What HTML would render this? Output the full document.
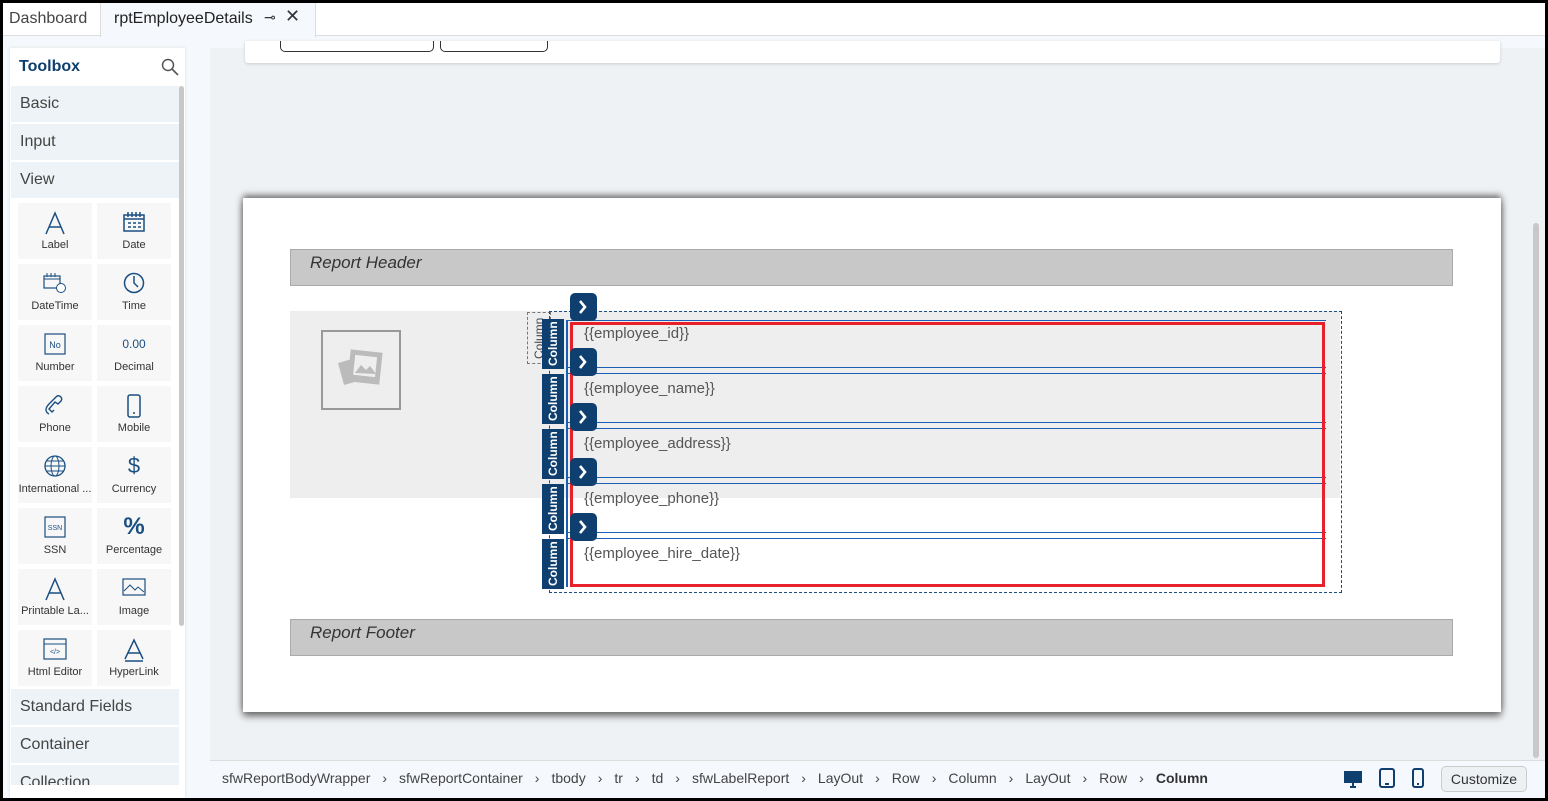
<!DOCTYPE html>
<html><head><meta charset="utf-8"><style>
*{box-sizing:border-box;margin:0;padding:0}
body{width:1548px;height:801px;overflow:hidden;background:#000;font-family:"Liberation Sans",sans-serif;position:relative}
.a{position:absolute}
#frame{left:3px;top:3px;width:1542px;height:795px;background:#f5f8fc;overflow:hidden}
.tile{position:absolute;width:74px;height:56px;background:#f7f7f7;text-align:center;font-size:11px;color:#333}
.tile svg{display:block;margin:8px auto 2px}
.tile span{display:block;position:absolute;left:0;right:0;top:36px;white-space:nowrap;overflow:hidden;text-overflow:ellipsis}
.cat{position:absolute;left:8px;width:168px;height:36px;background:#edf3f6;font-size:16px;color:#444;padding:9px 0 0 9px}
.col{position:absolute;left:539px;width:22px;height:50px;background:#0e3f6e;color:#fff;font-size:12px;font-weight:bold;writing-mode:vertical-rl;transform:rotate(180deg);text-align:center;line-height:22px}
.arr{position:absolute;left:567px;width:27px;height:28px;background:#0e3f6e;border-radius:5px;color:#fff}
.fld{position:absolute;left:581px;font-size:15px;color:#555}
.hl{position:absolute;left:565px;width:758px;height:1px;background:#1a5fb4}
.bc{font-size:14px;color:#444}
.bc i{font-style:normal;margin:0 12px 0 12px}
</style></head><body>
<div id="frame" class="a">
<div class="a" style="left:0;top:0;width:1542px;height:33px;background:#fff;border-bottom:1px solid #ddd"></div>
<div class="a" style="left:6px;top:7px;font-size:16px;color:#444">Dashboard</div>
<div class="a" style="left:97px;top:0;width:216px;height:34px;background:#f5f8fc;border-left:1px solid #ddd;border-right:1px solid #ddd"></div>
<div class="a" style="left:111px;top:7px;font-size:16px;color:#222">rptEmployeeDetails</div>
<div class="a" style="left:261px;top:6px;font-size:14px;color:#333">⊸</div>
<div class="a" style="left:282px;top:3px;font-size:18px;color:#333">✕</div>
<div class="a" style="left:7px;top:45px;width:175px;height:750px;background:#fff;box-shadow:0 0 3px #ddd"></div>
<div class="a" style="left:16px;top:55px;font-size:16px;color:#0e3f6e;font-weight:bold">Toolbox</div>
<svg class="a" style="left:158px;top:55px" width="18" height="18"><circle cx="7" cy="7" r="5.5" fill="none" stroke="#555" stroke-width="1.5"/><path d="M11 11l6 6" stroke="#555" stroke-width="1.6"/></svg>
<div class="a" style="left:176px;top:83px;width:5px;height:540px;background:#c8c8c8;border-radius:3px"></div>
<div class="cat" style="top:83px">Basic</div>
<div class="cat" style="top:121px">Input</div>
<div class="cat" style="top:159px">View</div>
<div class="tile" style="left:15px;top:200px"><svg width="22" height="24"><path d="M2 23L11 2l9 21M5 16h12" fill="none" stroke="#1a4f82" stroke-width="1.5"/></svg><span>Label</span></div>
<div class="tile" style="left:94px;top:200px"><svg width="22" height="22"><rect x="1" y="4" width="20" height="16" fill="none" stroke="#1a4f82" stroke-width="1.5"/><path d="M1 8h20M5 1v5M9 1v5M13 1v5M17 1v5M5 12h3M10 12h3M15 12h3M5 16h3M10 16h3M15 16h3" stroke="#1a4f82" stroke-width="1.5"/></svg><span>Date</span></div>
<div class="tile" style="left:15px;top:261px"><svg width="24" height="22"><rect x="1" y="4" width="16" height="12" fill="none" stroke="#1a4f82" stroke-width="1.2"/><path d="M1 7h16M4 1v4M8 1v4M12 1v4" stroke="#1a4f82"/><circle cx="18" cy="16" r="4.5" fill="#fff" stroke="#1a4f82"/></svg><span>DateTime</span></div>
<div class="tile" style="left:94px;top:261px"><svg width="22" height="22"><circle cx="11" cy="11" r="9.5" fill="none" stroke="#1a4f82" stroke-width="1.5"/><path d="M11 4v7l4 4" fill="none" stroke="#1a4f82" stroke-width="1.5"/></svg><span>Time</span></div>
<div class="tile" style="left:15px;top:322px"><svg width="22" height="22"><rect x="1" y="1" width="20" height="20" fill="none" stroke="#1a4f82" stroke-width="1.2"/><text x="11" y="15" font-size="9" text-anchor="middle" fill="#1a4f82" font-family="Liberation Sans">No</text></svg><span>Number</span></div>
<div class="tile" style="left:94px;top:322px"><div style="height:32px;padding-top:12px;color:#1a4f82;font-size:12px">0.00</div><span>Decimal</span></div>
<div class="tile" style="left:15px;top:383px"><svg width="24" height="22"><path d="M6 20c-4-2-4-6 0-10l8-8c3-1 6 2 4 5l-3 3-3-2-6 7 3 3 2-2" fill="none" stroke="#1a4f82" stroke-width="1.4"/></svg><span>Phone</span></div>
<div class="tile" style="left:94px;top:383px"><svg width="16" height="24"><rect x="2" y="1" width="12" height="22" rx="2" fill="none" stroke="#1a4f82" stroke-width="1.5"/><circle cx="8" cy="19" r="1" fill="#1a4f82"/></svg><span>Mobile</span></div>
<div class="tile" style="left:15px;top:444px"><svg width="24" height="22"><circle cx="12" cy="11" r="10" fill="none" stroke="#1a4f82" stroke-width="1.3"/><ellipse cx="12" cy="11" rx="4" ry="10" fill="none" stroke="#1a4f82"/><path d="M2 11h20M4 6h16M4 16h16" stroke="#1a4f82"/></svg><span>International ...</span></div>
<div class="tile" style="left:94px;top:444px"><div style="height:32px;padding-top:6px;color:#1a4f82;font-size:22px">$</div><span>Currency</span></div>
<div class="tile" style="left:15px;top:505px"><svg width="22" height="22"><rect x="1" y="1" width="20" height="20" fill="none" stroke="#1a4f82" stroke-width="1.2"/><text x="11" y="14" font-size="7" text-anchor="middle" fill="#1a4f82" font-family="Liberation Sans">SSN</text></svg><span>SSN</span></div>
<div class="tile" style="left:94px;top:505px"><div style="height:32px;padding-top:5px;color:#1a4f82;font-size:24px;font-weight:bold">%</div><span>Percentage</span></div>
<div class="tile" style="left:15px;top:566px"><svg width="22" height="24"><path d="M2 23L11 2l9 21M5 16h12" fill="none" stroke="#1a4f82" stroke-width="1.5"/></svg><span>Printable La...</span></div>
<div class="tile" style="left:94px;top:566px"><svg width="24" height="20"><rect x="1" y="2" width="22" height="16" fill="none" stroke="#1a4f82" stroke-width="1.2"/><path d="M2 14l6-6 5 5 3-3 6 5" fill="none" stroke="#1a4f82"/></svg><span>Image</span></div>
<div class="tile" style="left:15px;top:627px"><svg width="24" height="22"><rect x="1" y="1" width="22" height="20" fill="none" stroke="#1a4f82" stroke-width="1.2"/><path d="M1 6h22" stroke="#1a4f82"/><text x="12" y="16" font-size="7" text-anchor="middle" fill="#1a4f82" font-family="Liberation Sans">&lt;/&gt;</text></svg><span>Html Editor</span></div>
<div class="tile" style="left:94px;top:627px"><svg width="22" height="24"><path d="M2 21L11 2l9 19M5 15h12M2 23h18" fill="none" stroke="#1a4f82" stroke-width="1.5"/></svg><span>HyperLink</span></div>
<div class="cat" style="top:686px">Standard Fields</div>
<div class="cat" style="top:724px">Container</div>
<div class="cat" style="top:762px;height:20px;overflow:hidden">Collection</div>
<div class="a" style="left:207px;top:45px;width:1335px;height:712px;background:#eff2f5"></div>
<div class="a" style="left:1530px;top:220px;width:6px;height:535px;background:#c8c8c8;border-radius:3px"></div>
<div class="a" style="left:242px;top:38px;width:1255px;height:22px;background:#fff;border-radius:0 0 3px 3px;box-shadow:0 1px 3px #ccc"></div>
<div class="a" style="left:277px;top:38px;width:154px;height:11px;border:1px solid #333;border-top:none;border-radius:0 0 5px 5px"></div>
<div class="a" style="left:437px;top:38px;width:108px;height:11px;border:1px solid #333;border-top:none;border-radius:0 0 5px 5px"></div>
<div class="a" style="left:240px;top:195px;width:1258px;height:514px;background:#fff;box-shadow:0 -3px 6px #777,0 4px 7px #666"></div>
<div class="a" style="left:287px;top:246px;width:1163px;height:37px;background:#c8c8c8;border:1px solid #aaa"></div>
<div class="a" style="left:307px;top:250px;font-size:17px;font-style:italic;color:#333">Report Header</div>
<div class="a" style="left:287px;top:308px;width:1050px;height:187px;background:#eee"></div>
<div class="a" style="left:318px;top:327px;width:80px;height:80px;border:2px solid #999"></div>
<svg class="a" style="left:333px;top:345px" width="50" height="46"><path d="M2 15l14-4 6 22-14 4z" fill="#bbb"/><rect x="13" y="3" width="32" height="32" fill="#bbb" transform="rotate(6 29 19)"/><rect x="18" y="8" width="22" height="20" fill="#eee" transform="rotate(6 29 19)"/><path d="M19 25l6-8 5 5 4-4 6 8z" fill="#bbb"/></svg>
<div class="a" style="left:524px;top:309px;width:24px;height:52px;border:1px dashed #777;font-size:12px;color:#444;writing-mode:vertical-rl;transform:rotate(180deg);line-height:22px;text-align:center">Column</div>
<div class="a" style="left:546px;top:308px;width:793px;height:282px;border:1px dashed #1a4f82"></div>
<div class="a" style="left:563px;top:317px;width:2px;height:267px;background:#1a5fb4"></div>
<div class="hl" style="top:317px"></div>
<div class="hl" style="top:364px"></div><div class="hl" style="top:370px"></div>
<div class="hl" style="top:419px"></div><div class="hl" style="top:425px"></div>
<div class="hl" style="top:474px"></div><div class="hl" style="top:480px"></div>
<div class="hl" style="top:529px"></div><div class="hl" style="top:535px"></div>
<div class="col" style="top:316px">Column</div>
<div class="col" style="top:371px">Column</div>
<div class="col" style="top:426px">Column</div>
<div class="col" style="top:481px">Column</div>
<div class="col" style="top:536px">Column</div>
<div class="fld" style="top:322px">{{employee_id}}</div>
<div class="fld" style="top:377px">{{employee_name}}</div>
<div class="fld" style="top:432px">{{employee_address}}</div>
<div class="fld" style="top:487px">{{employee_phone}}</div>
<div class="fld" style="top:542px">{{employee_hire_date}}</div>
<div class="a" style="left:567px;top:319px;width:755px;height:265px;border:3px solid #e8202a"></div>
<svg width="0" height="0" style="position:absolute"><defs><path id="chev" d="M10 8l5 6-5 6" fill="none" stroke="#fff" stroke-width="2.6"/></defs></svg>
<svg class="arr" style="top:290px" viewBox="0 0 27 28"><use href="#chev"/></svg>
<svg class="arr" style="top:345px" viewBox="0 0 27 28"><use href="#chev"/></svg>
<svg class="arr" style="top:400px" viewBox="0 0 27 28"><use href="#chev"/></svg>
<svg class="arr" style="top:455px" viewBox="0 0 27 28"><use href="#chev"/></svg>
<svg class="arr" style="top:510px" viewBox="0 0 27 28"><use href="#chev"/></svg>
<div class="a" style="left:287px;top:616px;width:1163px;height:37px;background:#c8c8c8;border:1px solid #aaa"></div>
<div class="a" style="left:307px;top:620px;font-size:17px;font-style:italic;color:#333">Report Footer</div>
<div class="a" style="left:207px;top:757px;width:1335px;height:40px;background:#f5f8fc;border-top:1px solid #ddd"></div>
<div class="a bc" style="left:219px;top:767px;white-space:nowrap">sfwReportBodyWrapper<i>›</i>sfwReportContainer<i>›</i>tbody<i>›</i>tr<i>›</i>td<i>›</i>sfwLabelReport<i>›</i>LayOut<i>›</i>Row<i>›</i>Column<i>›</i>LayOut<i>›</i>Row<i>›</i><b style="color:#333">Column</b></div>
<svg class="a" style="left:1340px;top:767px" width="20" height="18"><rect x="1" y="1" width="18" height="12" fill="#0e3f6e"/><path d="M7 17h6M10 13v4" stroke="#0e3f6e" stroke-width="2"/></svg>
<svg class="a" style="left:1376px;top:765px" width="16" height="20"><rect x="1" y="1" width="14" height="18" rx="2" fill="none" stroke="#0e3f6e" stroke-width="2"/><path d="M6 16h4" stroke="#0e3f6e" stroke-width="2"/></svg>
<svg class="a" style="left:1409px;top:765px" width="12" height="20"><rect x="1" y="1" width="10" height="18" rx="2" fill="none" stroke="#0e3f6e" stroke-width="2"/><path d="M5 16h2" stroke="#0e3f6e" stroke-width="2"/></svg>
<div class="a" style="left:1438px;top:763px;width:86px;height:26px;border:1px solid #ccc;border-radius:5px;background:#eef1f4;font-size:14px;color:#333;text-align:center;line-height:24px">Customize</div>
</div>
</body></html>
